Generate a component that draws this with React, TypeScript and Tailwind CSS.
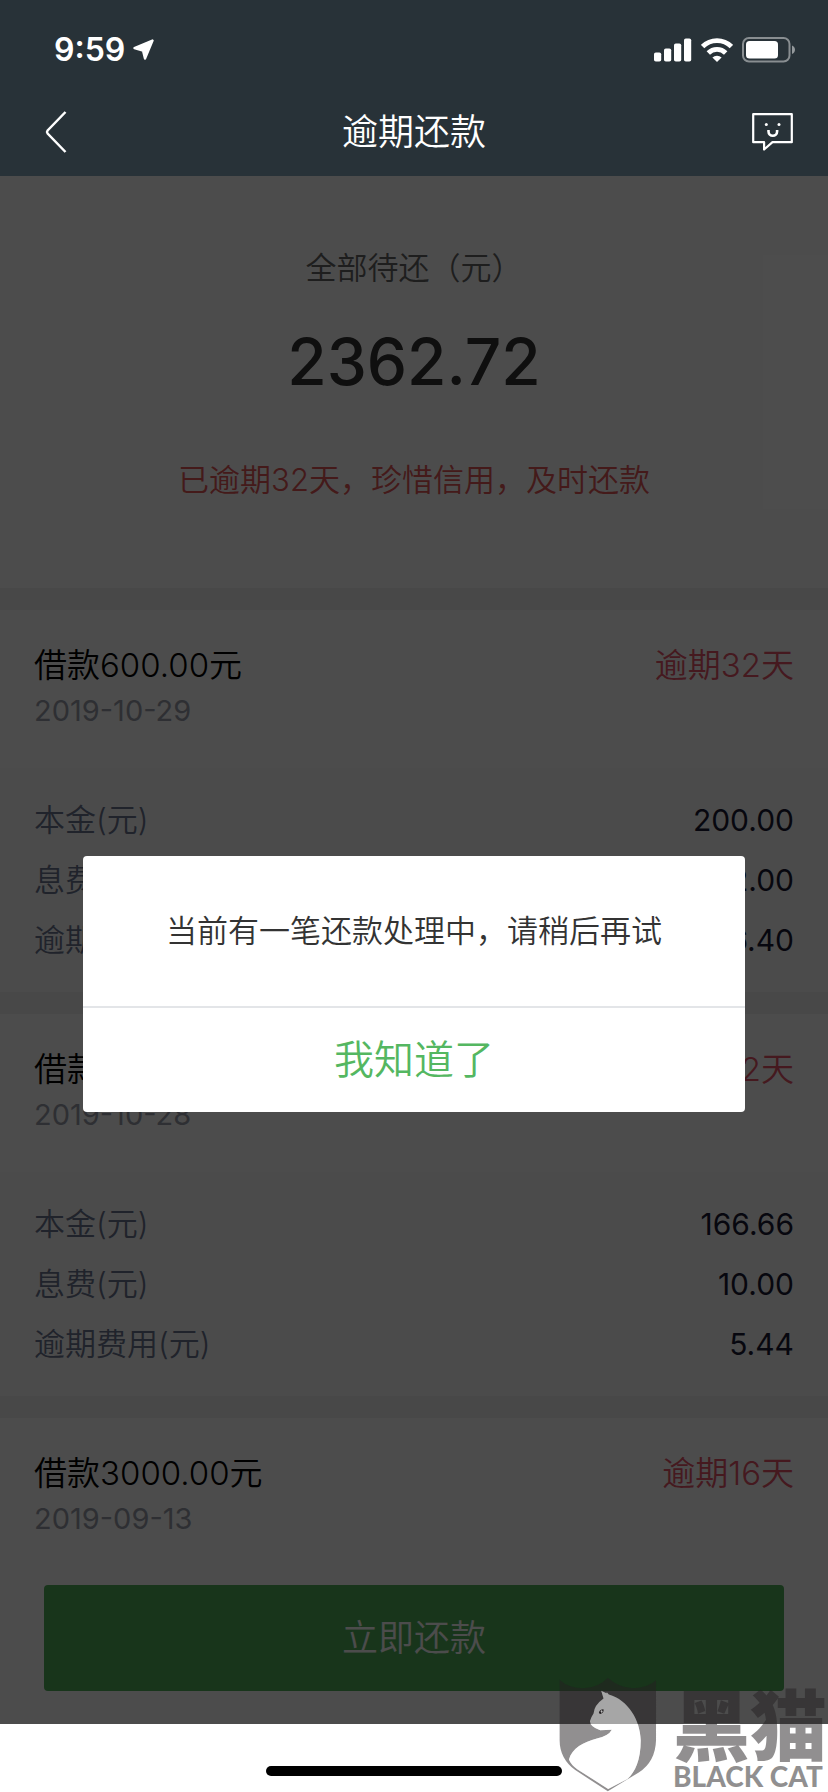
const bills = [
  {
    id: 1,
    title: "借款600.00元",
    date: "2019-10-29",
    status: "逾期32天",
    items: [
      { label: "本金(元)", value: "200.00" },
      { label: "息费(元)", value: "12.00" },
      { label: "逾期费用(元)", value: "6.40" },
    ],
  },
  {
    id: 2,
    title: "借款500.00元",
    date: "2019-10-28",
    status: "逾期32天",
    items: [
      { label: "本金(元)", value: "166.66" },
      { label: "息费(元)", value: "10.00" },
      { label: "逾期费用(元)", value: "5.44" },
    ],
  },
  { id: 3, title: "借款3000.00元", date: "2019-09-13", status: "逾期16天", items: [] },
];

const StatusBar = () => (
  <div className="flex h-[88px] items-center justify-between pt-3 pr-8 pl-[54px] text-white">
    <div className="flex items-center gap-2">
      <span className="text-[32px] leading-10 font-semibold">9:59</span>
      <svg width="22" height="22" viewBox="0 0 22 22" fill="currentColor" aria-hidden="true">
        <path
          d="M19.5 1.5 1.5 9 10 11.5 12 19.5Z"
          stroke="currentColor"
          strokeWidth="2.4"
          strokeLinejoin="round"
        />
      </svg>
    </div>
    <div className="flex items-center gap-[9px]">
      <svg width="38" height="24" viewBox="0 0 38 24" fill="currentColor" aria-hidden="true">
        <rect x="0" y="14.5" width="7.2" height="9" rx="1.8" />
        <rect x="10" y="10.5" width="7.2" height="13" rx="1.8" />
        <rect x="20" y="5.5" width="7.2" height="18" rx="1.8" />
        <rect x="30" y="0.5" width="7.2" height="23" rx="1.8" />
      </svg>
      <svg width="32" height="24" viewBox="0 0 32 24" fill="none" stroke="currentColor" strokeWidth="4.8" aria-hidden="true">
        <path d="M1.6 8.6a20.4 20.4 0 0 1 28.8 0" />
        <path d="M7.3 15a12.3 12.3 0 0 1 17.4 0" />
        <path d="M16 24l-4.6-4.5a6.6 6.6 0 0 1 9.2 0Z" fill="currentColor" stroke="none" />
      </svg>
      <svg width="54" height="26" viewBox="0 0 54 26" aria-hidden="true">
        <rect x="1" y="1" width="46.5" height="23.5" rx="6" fill="none" stroke="#fff" strokeOpacity=".45" strokeWidth="2" />
        <rect x="4" y="4" width="32" height="17.5" rx="3.5" fill="#fff" />
        <path d="M50 8.5c4 1.5 4 7 0 8.5Z" fill="#fff" fillOpacity=".5" />
      </svg>
    </div>
  </div>
);

const Header = () => (
  <header className="shrink-0 bg-[#283238] text-white">
    <StatusBar />
    <div className="grid h-[88px] grid-cols-[1fr_auto_1fr] items-center px-[34px]">
      <button type="button" aria-label="返回" className="justify-self-start">
        <svg width="34" height="44" viewBox="-10 0 34 44" fill="none" stroke="currentColor" strokeWidth="2.5" aria-hidden="true">
          <path d="M21.5 2 3.6 20.5q-1.2 1.5 0 3L21.5 42" />
        </svg>
      </button>
      <h1 className="text-4xl leading-12">逾期还款</h1>
      <button type="button" aria-label="在线客服" className="justify-self-end">
        <svg width="42" height="40" viewBox="0 0 42 40" fill="none" stroke="currentColor" strokeWidth="2.2" aria-hidden="true">
          <path d="M1.2 2.2h38.6v28H20.5l-8.4 7.3v-7.3H1.2Z" strokeLinejoin="round" />
          <path d="M16.5 18v1.5a4.3 4.3 0 0 0 8.6 0V18" strokeWidth="2.6" />
          <circle cx="14.3" cy="12.5" r="1.5" fill="currentColor" stroke="none" />
          <circle cx="27" cy="12.5" r="1.5" fill="currentColor" stroke="none" />
        </svg>
      </button>
    </div>
  </header>
);

const Summary = () => (
  <section className="bg-white pt-[68px] pb-[84px] text-center">
    <p className="text-[31px] leading-12 text-[#666]">全部待还（元）</p>
    <p className="mt-[34px] text-[64px] leading-[72px] font-medium text-[#333]">2362.72</p>
    <p className="mt-[58px] text-[31px] leading-12 text-[#e35757]">已逾期32天，珍惜信用，及时还款</p>
  </section>
);

const BillCard = ({ bill }: { bill: (typeof bills)[number] }) => (
  <article className="mt-[22px] bg-[#fcfcfc]">
    <div className="flex h-[158px] items-start justify-between bg-white px-[34px] pt-[31px]">
      <div>
        <h2 className="text-[33px] leading-12 text-black">{bill.title}</h2>
        <p className="text-[29px] leading-[44px] font-normal text-[#9c9fab]">{bill.date}</p>
      </div>
      <span className="text-[33px] leading-12 text-[#e65569]">{bill.status}</span>
    </div>
    {bill.items.length > 0 && (
      <dl className="py-[22px]">
        {bill.items.map((item) => (
          <div key={item.label} className="flex h-15 items-center justify-between px-[34px] leading-10">
            <dt className="text-[31px] text-[#6b7590]">{item.label}</dt>
            <dd className="text-[30px] font-normal text-[#1a1a33]">{item.value}</dd>
          </div>
        ))}
      </dl>
    )}
  </article>
);

const NoticeDialog = () => (
  <div role="dialog" aria-modal="true" aria-labelledby="notice" className="w-4/5 overflow-hidden rounded bg-white text-center">
    <p id="notice" className="px-8 pt-[51px] pb-[51px] text-[31px] leading-12 text-[#333]">
      当前有一笔还款处理中，请稍后再试
    </p>
    <button type="button" className="h-[106px] w-full border-t-2 border-[#e3e5e8] text-[40px] leading-12 text-[#54b761]">
      我知道了
    </button>
  </div>
);

const Watermark = () => (
  <div className="pointer-events-none absolute right-0 bottom-0 flex items-end gap-4 text-[#231f21]/50">
    <svg width="98" height="115" viewBox="57 50 293 346" aria-hidden="true">
      <path
        fill="currentColor"
        fillRule="evenodd"
        d="M58 58Q85 84 130 84Q175 82 203 52Q235 82 280 84Q325 82 348 60V240Q346 305 296 337L203 394L105 330Q58 295 58 240ZM183 91L199 99L200 96L206 103C265 120 300 180 302 240C302 300 285 335 262 357L204 387L112 328Q92 314 86 298C95 265 130 245 170 235Q205 228 215 209L180 210Q150 200 149 183Q152 172 160 160Q162 135 190 115Z"
      />
      <path
        fill="#fff"
        fillOpacity=".5"
        d="M183 91L199 99L200 96L206 103C265 120 300 180 302 240C302 300 285 335 262 357L204 387L112 328Q92 314 86 298C95 265 130 245 170 235Q205 228 215 209L180 210Q150 200 149 183Q152 172 160 160Q162 135 190 115Z"
      />
      <path fill="#231f21" d="M176 158Q178 147 190 147Q192 158 180 161Z" />
      <path fill="#bbb" d="M184 149l4 4-4 5-3-4Z" />
    </svg>
    <div className="flex w-[155px] flex-col font-black whitespace-nowrap">
      <span className="font-['Noto_Sans_CJK_SC',sans-serif] text-[77px] leading-[76px]">黑猫</span>
      <span className="font-['Lato',sans-serif] text-[28px] leading-8">BLACK CAT</span>
    </div>
  </div>
);

const App = () => {
  return (
    <div
      lang="zh-CN"
      className="relative flex h-screen flex-col overflow-hidden bg-white font-['Inter','Noto_Sans_CJK_SC',sans-serif] font-[350]"
    >
      <Header />
      <main className="relative flex min-h-0 flex-1 flex-col">
        <div className="min-h-0 flex-1 overflow-hidden bg-[#f0f0f0]">
          <Summary />
          {bills.map((bill) => (
            <BillCard key={bill.id} bill={bill} />
          ))}
        </div>
        <div className="shrink-0 bg-white px-11 py-[33px]">
          <button type="button" className="h-[106px] w-full rounded bg-[#50b25c] text-4xl text-white">
            立即还款
          </button>
        </div>
        <div className="absolute inset-0 bg-black/70" />
      </main>
      <footer className="flex h-[68px] shrink-0 items-end justify-center pb-4">
        <div className="h-[10px] w-[296px] rounded-full bg-black" />
      </footer>
      <div className="absolute inset-x-0 top-44 bottom-0 flex items-center justify-center">
        <NoticeDialog />
      </div>
      <Watermark />
    </div>
  );
};

export default App;
